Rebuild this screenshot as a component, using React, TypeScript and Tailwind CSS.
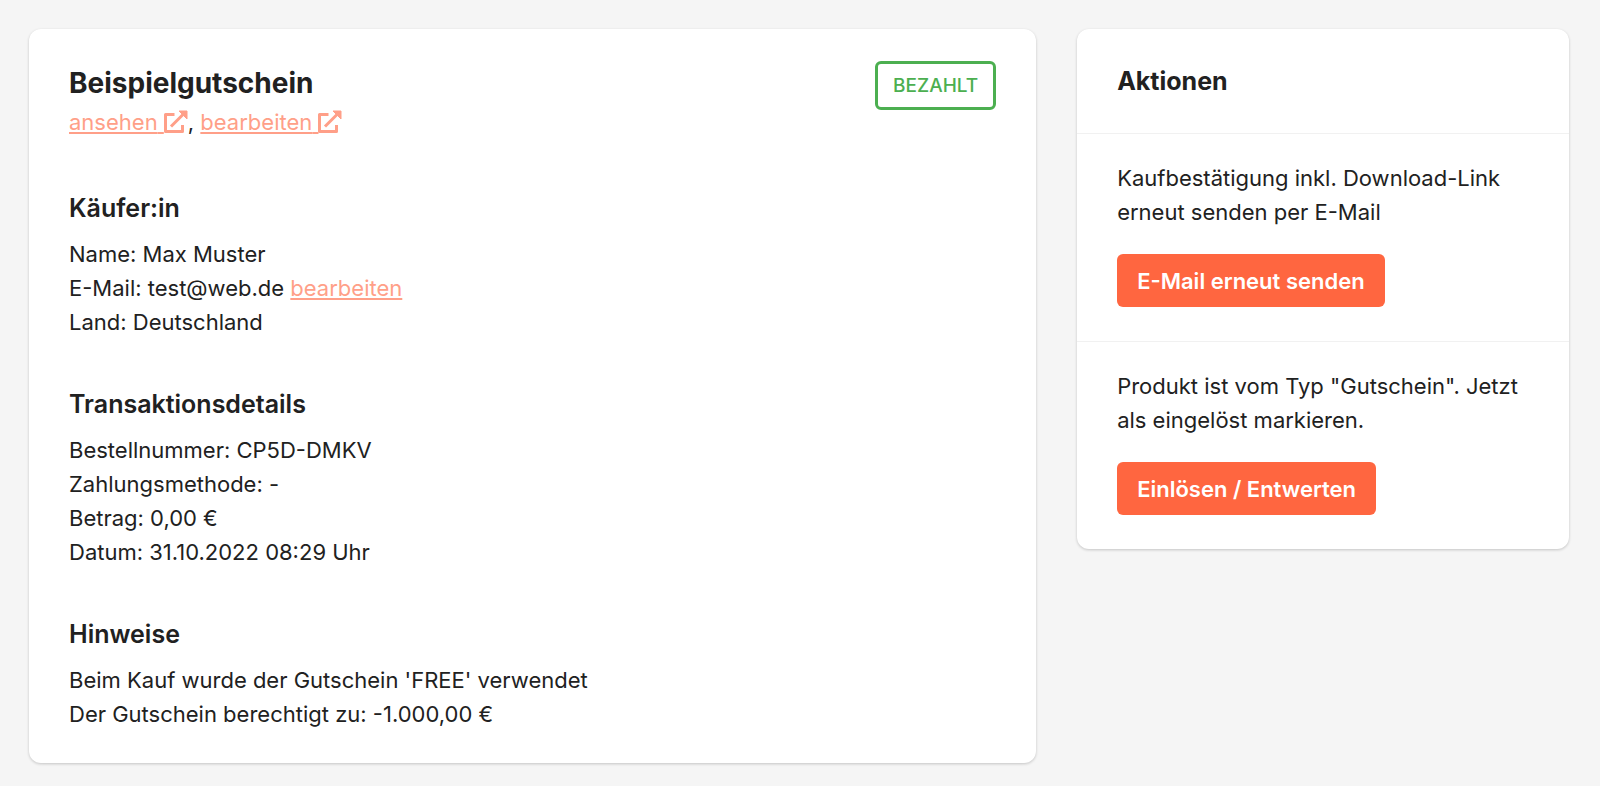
import React from "react";

interface SectionProps {
  title: string;
  children: React.ReactNode;
}

interface ActionProps {
  text: string;
  label: string;
}

const App: React.FC = () => {
  return (
    <div className="min-h-screen bg-[#f5f5f5] py-[29px] pr-[31px] pl-[29px] font-[Inter,sans-serif] text-[22px] leading-[34px] text-[#212121]">
      <div className="grid grid-cols-[43fr_21fr] items-start gap-[41px]">
        <main className="rounded-xl bg-white px-10 py-8 shadow-[0_1px_3px_rgba(0,0,0,0.2)]">
          <header className="mb-[52px] flex items-start justify-between">
            <div>
              <h1 className="text-[28px] leading-[44px] font-bold">
                Beispielgutschein
              </h1>
              <p>
                <ExternalLink label="ansehen" />, <ExternalLink label="bearbeiten" />
              </p>
            </div>
            <span className="rounded-md border-3 border-[#4caf50] px-[15px] pt-[5px] pb-1 text-[19px] font-medium text-[#4caf50] uppercase">
              Bezahlt
            </span>
          </header>

          <div className="flex flex-col gap-12">
            <Section title="Käufer:in">
              <p>Name: Max Muster</p>
              <p>
                E-Mail: test@web.de{" "}
                <a href="#" className="text-[#ff9f88] underline">
                  bearbeiten
                </a>
              </p>
              <p>Land: Deutschland</p>
            </Section>
            <Section title="Transaktionsdetails">
              <p>Bestellnummer: CP5D-DMKV</p>
              <p>Zahlungsmethode: -</p>
              <p>Betrag: 0,00 €</p>
              <p>Datum: 31.10.2022 08:29 Uhr</p>
            </Section>
            <Section title="Hinweise">
              <p>Beim Kauf wurde der Gutschein 'FREE' verwendet</p>
              <p>Der Gutschein berechtigt zu: -1.000,00 €</p>
            </Section>
          </div>
        </main>

        <aside className="divide-y divide-[#f1f1f1] rounded-xl bg-white shadow-[0_1px_3px_rgba(0,0,0,0.2)]">
          <h2 className="px-10 py-[35px] text-[25px] font-bold">Aktionen</h2>
          <Action
            text="Kaufbestätigung inkl. Download-Link erneut senden per E-Mail"
            label="E-Mail erneut senden"
          />
          <Action
            text={'Produkt ist vom Typ "Gutschein". Jetzt als eingelöst markieren.'}
            label="Einlösen / Entwerten"
          />
        </aside>
      </div>
    </div>
  );
};

export default App;

const Section: React.FC<SectionProps> = ({ title, children }) => {
  return (
    <section>
      <h2 className="mb-3 text-[25px] font-semibold">{title}</h2>
      {children}
    </section>
  );
};

const Action: React.FC<ActionProps> = ({ text, label }) => {
  return (
    <section className="px-10 pt-[27px] pb-[34px]">
      <p>{text}</p>
      <button
        type="button"
        className="mt-[25px] block cursor-pointer rounded-md bg-[#ff6640] px-5 pt-[10px] pb-[9px] font-semibold text-white hover:bg-[#f0552f]"
      >
        {label}
      </button>
    </section>
  );
};

const ExternalLink = ({ label }: { label: string }) => {
  return (
    <a href="#" className="text-[#ff9f88] underline">
      {label}{" "}
      <svg
        viewBox="0 0 24 24"
        className="inline-block size-6 align-[-4px]"
        fill="none"
        stroke="currentColor"
        strokeWidth={3}
        strokeLinejoin="round"
        aria-hidden="true"
      >
        <path d="M10.5 4.5H1.5v17h17V15" />
        <path d="M7 16.5 19 4.5" />
        <path d="M15 1h8v8z" fill="currentColor" strokeWidth={1} />
      </svg>
    </a>
  );
};
